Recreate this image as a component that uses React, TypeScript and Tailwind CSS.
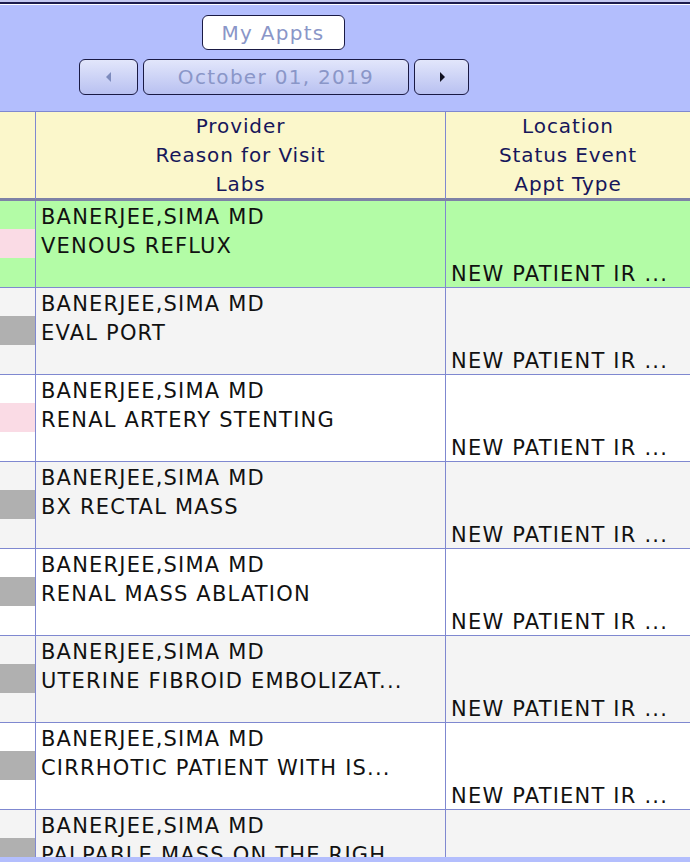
const rows = [
  { reason: 'VENOUS REFLUX', mark: 'pink', bg: 'bg-[#b3fca6]' },
  { reason: 'EVAL PORT', mark: 'gray', bg: 'bg-[#f4f4f4]' },
  { reason: 'RENAL ARTERY STENTING', mark: 'pink', bg: 'bg-white' },
  { reason: 'BX RECTAL MASS', mark: 'gray', bg: 'bg-[#f4f4f4]' },
  { reason: 'RENAL MASS ABLATION', mark: 'gray', bg: 'bg-white' },
  { reason: 'UTERINE FIBROID EMBOLIZAT...', mark: 'gray', bg: 'bg-[#f4f4f4]' },
  { reason: 'CIRRHOTIC PATIENT WITH IS...', mark: 'gray', bg: 'bg-white' },
  { reason: 'PALPABLE MASS ON THE RIGH', mark: 'gray', bg: 'bg-[#f4f4f4]' },
];

function NavButton({ className, children }: { className: string; children: React.ReactNode }) {
  return (
    <div
      className={`h-[36px] flex items-center justify-center rounded-[6px] border border-[#1a1a44] bg-gradient-to-b from-[#e2e6fb] to-[#b9c1f1] text-[#8a96c8] tracking-[1.3px] ${className}`}
    >
      {children}
    </div>
  );
}

export default function App() {
  return (
    <div className="w-[690px] h-[862px] overflow-hidden bg-[#b3befd] flex flex-col font-['DejaVu_Sans',Verdana,sans-serif] text-[20px]">
      {/* top rule */}
      <div className="h-[2px] bg-[#c3c8ef]" />
      <div className="h-[2px] bg-[#1c1c4c]" />
      <div className="h-[1px] bg-white" />

      {/* toolbar */}
      <div className="h-[106px] w-[546px] flex flex-col items-center pt-[10px]">
        <div className="w-[143px] h-[35px] flex items-center justify-center rounded-[6px] border border-[#1a1a44] bg-white text-[#8a96c8] tracking-[1.3px]">
          My Appts
        </div>
        <div className="mt-[9px] flex gap-[5px] pl-[79px] self-start">
          <NavButton className="w-[59px]">
            <svg width="8" height="12" viewBox="0 0 8 12">
              <path d="M6 1 L1 6 L6 11 Z" fill="#7d8bbd" />
            </svg>
          </NavButton>
          <NavButton className="w-[266px]">October 01, 2019</NavButton>
          <NavButton className="w-[55px]">
            <svg width="8" height="12" viewBox="0 0 8 12">
              <path d="M2 1 L7 6 L2 11 Z" fill="#101020" />
            </svg>
          </NavButton>
        </div>
      </div>

      {/* table */}
      <div className="h-[746px] overflow-hidden border-t border-[#7f88d0]">
        <div className="grid grid-cols-[36px_410px_1fr] bg-[#fbf7cb] text-[#16165a] leading-[29px] tracking-[0.9px] h-[86px]">
          <div className="border-r border-[#7f88d0]" />
          <div className="border-r border-[#7f88d0] text-center">
            <div>Provider</div>
            <div>Reason for Visit</div>
            <div>Labs</div>
          </div>
          <div className="text-center">
            <div>Location</div>
            <div>Status Event</div>
            <div>Appt Type</div>
          </div>
        </div>
        <div className="h-[3px] bg-[#7e82a6]" />
        {rows.map((r, i) => (
          <div
            key={i}
            className={`grid grid-cols-[36px_410px_1fr] h-[87px] border-b border-[#7f88d0] leading-[29px] text-[21px] tracking-[1.2px] text-[#111111] whitespace-nowrap overflow-hidden ${r.bg}`}
          >
            <div className="border-r border-[#7f88d0] flex flex-col">
              <div className="h-[28px]" />
              <div className={`h-[29px] ${r.mark === 'pink' ? 'bg-[#fadbe5]' : 'bg-[#b0b0b0]'}`} />
            </div>
            <div className="border-r border-[#7f88d0] pl-[5px] pt-[2px] overflow-hidden">
              <div>BANERJEE,SIMA MD</div>
              <div>{r.reason}</div>
            </div>
            <div className="pl-[5px] pt-[59px] overflow-hidden">
              <div>NEW PATIENT IR ...</div>
            </div>
          </div>
        ))}
      </div>
    </div>
  );
}
